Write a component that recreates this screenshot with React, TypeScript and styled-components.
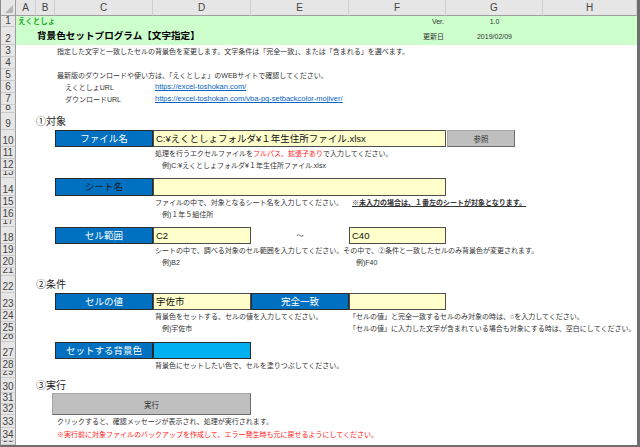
import React from 'react';
import styled, { createGlobalStyle } from 'styled-components';

const GlobalStyle = createGlobalStyle`
  html, body {
    margin: 0;
    padding: 0;
    background: #ffffff;
  }
  body {
    font-family: 'Liberation Sans', 'Noto Sans CJK JP', sans-serif;
  }
`;

const COLS = ['A', 'B', 'C', 'D', 'E', 'F', 'G', 'H'];
const ROW_HEIGHTS = [
  11, 18, 12, 12, 12, 12, 12, 8, 17, 17, 12, 12, 7, 18, 12, 12, 7, 17, 12, 12, 8,
  17, 17, 12, 12, 8, 17, 12, 7, 15, 11, 11, 13, 13, 4,
];

// "D10:F10" -> grid placement (column A is grid line 2, row 1 is grid line 2)
const colLine = (c: string) => c.charCodeAt(0) - 63;
const area = (ref: string) => {
  const [a, b = a] = ref.split(':');
  const [, c1, r1] = a.match(/([A-H])(\d+)/)!;
  const [, c2, r2] = b.match(/([A-H])(\d+)/)!;
  return `
    grid-column: ${colLine(c1)} / ${colLine(c2) + 1};
    grid-row: ${Number(r1) + 1} / ${Number(r2) + 2};
  `;
};

const Sheet = styled.div`
  display: grid;
  width: 640px;
  height: 447px;
  box-sizing: border-box;
  border-left: 1px solid #8c8c8c;
  border-right: 3px solid #6e6e6e;
  border-bottom: 2px solid #6e6e6e;
  grid-template-columns: 15px 20px 19px 98px 98px 98px 97px 97px 94px;
  grid-template-rows: 16px ${ROW_HEIGHTS.map((h) => `${h}px`).join(' ')};
  overflow: hidden;
  color: #333333;
`;

const Corner = styled.div`
  grid-column: 1;
  grid-row: 1;
  position: relative;
  background: #e6e6e6;
  border-right: 1px solid #9e9e9e;
  border-bottom: 1px solid #9e9e9e;
  box-sizing: border-box;

  &::after {
    content: '';
    position: absolute;
    right: 2px;
    bottom: 2px;
    border-left: 8px solid transparent;
    border-bottom: 8px solid #b5b5b5;
  }
`;

const ColHead = styled.div<{ $col: number }>`
  grid-column: ${(p) => p.$col};
  grid-row: 1;
  display: flex;
  align-items: center;
  justify-content: center;
  background: #e6e6e6;
  border-right: 1px solid #cfcfcf;
  border-bottom: 1px solid #9e9e9e;
  box-sizing: border-box;
  font-size: 10px;
  color: #444444;
`;

const RowHead = styled.div<{ $row: number }>`
  grid-column: 1;
  grid-row: ${(p) => p.$row + 1};
  display: flex;
  align-items: flex-end;
  justify-content: center;
  overflow: hidden;
  background: #e6e6e6;
  border-right: 1px solid #9e9e9e;
  border-bottom: 1px solid #c9c9c9;
  box-sizing: border-box;
  font-size: 10px;
  line-height: 11px;
  color: #444444;
`;

const Band = styled.div<{ $at: string }>`
  ${(p) => area(p.$at)}
  background: #ccffcc;
`;

const Text = styled.div<{
  $at: string;
  $size?: number;
  $indent?: number;
  $align?: 'flex-start' | 'center' | 'flex-end';
  $color?: string;
  $bold?: boolean;
  $underline?: boolean;
}>`
  ${(p) => area(p.$at)}
  z-index: 1;
  display: flex;
  align-items: center;
  justify-content: ${(p) => p.$align ?? 'flex-start'};
  min-width: 0;
  padding: 0 2px 0 ${(p) => p.$indent ?? 2}px;
  font-size: ${(p) => p.$size ?? 7}px;
  line-height: 1;
  white-space: nowrap;
  color: ${(p) => p.$color ?? '#333333'};
  font-weight: ${(p) => (p.$bold ? 700 : 400)};
  text-decoration: ${(p) => (p.$underline ? 'underline' : 'none')};
`;

const Red = styled.span`
  color: #ff2020;
`;

const Link = styled.span`
  font-size: 7.5px;
  color: #0563c1;
  text-decoration: underline;
`;

const Label = styled.div<{ $at: string; $dark?: boolean }>`
  ${(p) => area(p.$at)}
  display: flex;
  align-items: center;
  justify-content: center;
  background: #0070c0;
  border: 1px solid #2a2a2a;
  font-size: 9.5px;
  line-height: 1;
  white-space: nowrap;
  color: ${(p) => (p.$dark ? '#1b1b1b' : '#ffffff')};
`;

const Entry = styled.div<{ $at: string }>`
  ${(p) => area(p.$at)}
  display: flex;
  align-items: center;
  padding-left: 2px;
  background: #ffffcc;
  border: 1px solid #4d4d4d;
  font-size: 9.5px;
  line-height: 1;
  white-space: nowrap;
  color: #111111;
`;

const Swatch = styled.div<{ $at: string }>`
  ${(p) => area(p.$at)}
  background: #00b0f0;
  border: 1px solid #2a2a2a;
`;

const Button = styled.div<{ $at: string; $inset?: number; $width?: number }>`
  ${(p) => area(p.$at)}
  display: flex;
  align-items: center;
  justify-content: center;
  ${(p) => (p.$width ? `width: ${p.$width}px;` : '')}
  margin-left: ${(p) => p.$inset ?? 0}px;
  background: #bfbfbf;
  border: 1px solid #a6a6a6;
  border-right-color: #6b6b6b;
  border-bottom-color: #6b6b6b;
  font-size: 7.5px;
  color: #333333;
`;

export default function App() {
  return (
    <>
      <GlobalStyle />
      <Sheet>
        <Corner />
        {COLS.map((c, i) => (
          <ColHead key={c} $col={i + 2}>
            {c}
          </ColHead>
        ))}
        {ROW_HEIGHTS.map((_, i) => (
          <RowHead key={i} $row={i + 1}>
            {i + 1}
          </RowHead>
        ))}

        <Band $at="A1:H2" />
        <Text $at="A1" $size={7.5} $color="#2da82d" $bold>
          えくとしょ
        </Text>
        <Text $at="B2" $size={9.6} $color="#000000" $bold $indent={1}>
          背景色セットプログラム【文字指定】
        </Text>
        <Text $at="F1" $size={7} $align="flex-end">
          Ver.
        </Text>
        <Text $at="G1" $size={7} $align="center">
          1.0
        </Text>
        <Text $at="F2" $size={7} $align="flex-end">
          更新日
        </Text>
        <Text $at="G2" $size={7} $align="center">
          2019/02/09
        </Text>

        <Text $at="C3">
          指定した文字と一致したセルの背景色を変更します。文字条件は「完全一致」、または「含まれる」を選べます。
        </Text>
        <Text $at="C5">
          最新版のダウンロードや使い方は、「えくとしょ」のWEBサイトで確認してください。
        </Text>
        <Text $at="C6" $indent={10}>
          えくとしょURL
        </Text>
        <Text $at="D6">
          <Link>https://excel-toshokan.com/</Link>
        </Text>
        <Text $at="C7" $indent={10}>
          ダウンロードURL
        </Text>
        <Text $at="D7">
          <Link>https://excel-toshokan.com/vba-pg-setbackcolor-mojiver/</Link>
        </Text>

        <Text $at="B9" $size={10} $indent={0} $color="#222222">
          ①対象
        </Text>
        <Label $at="C10">ファイル名</Label>
        <Entry $at="D10:F10">C:¥えくとしょフォルダ¥１年生住所ファイル.xlsx</Entry>
        <Button $at="G10" $inset={1} $width={66}>
          参照
        </Button>
        <Text $at="D11">
          処理を行うエクセルファイルを<Red>フルパス、拡張子あり</Red>で入力してください。
        </Text>
        <Text $at="D12" $indent={9}>
          例)C:¥えくとしょフォルダ¥１年生住所ファイル.xlsx
        </Text>

        <Label $at="C14" $dark>
          シート名
        </Label>
        <Entry $at="D14:F14" />
        <Text $at="D15">ファイルの中で、対象となるシート名を入力してください。</Text>
        <Text $at="F15" $indent={3} $bold $underline>
          ※未入力の場合は、１番左のシートが対象となります。
        </Text>
        <Text $at="D16" $indent={9}>
          例)１年５組住所
        </Text>

        <Label $at="C18">セル範囲</Label>
        <Entry $at="D18">C2</Entry>
        <Text $at="E18" $size={7} $align="center">
          ～
        </Text>
        <Entry $at="F18">C40</Entry>
        <Text $at="D19">
          シートの中で、調べる対象のセル範囲を入力してください。その中で、②条件と一致したセルのみ背景色が変更されます。
        </Text>
        <Text $at="D20" $indent={9}>
          例)B2
        </Text>
        <Text $at="F20" $indent={7}>
          例)F40
        </Text>

        <Text $at="B22" $size={10} $indent={0} $color="#222222">
          ②条件
        </Text>
        <Label $at="C23">セルの値</Label>
        <Entry $at="D23">宇佐市</Entry>
        <Label $at="E23">完全一致</Label>
        <Entry $at="F23" />
        <Text $at="D24">背景色をセットする、セルの値を入力してください。</Text>
        <Text $at="F24" $indent={0}>
          「セルの値」と完全一致するセルのみ対象の時は、○を入力してください。
        </Text>
        <Text $at="D25" $indent={9}>
          例)宇佐市
        </Text>
        <Text $at="F25" $indent={0}>
          「セルの値」に入力した文字が含まれている場合も対象にする時は、空白にしてください。
        </Text>

        <Label $at="C27">セットする背景色</Label>
        <Swatch $at="D27" />
        <Text $at="D28">背景色にセットしたい色で、セルを塗りつぶしてください。</Text>

        <Text $at="B30" $size={10} $indent={0} $color="#222222">
          ③実行
        </Text>
        <Button $at="B31:D32" $inset={16}>
          実行
        </Button>
        <Text $at="C33">クリックすると、確認メッセージが表示され、処理が実行されます。</Text>
        <Text $at="C34" $color="#ff2020">
          ※実行前に対象ファイルのバックアップを作成して、エラー発生時も元に戻せるようにしてください。
        </Text>
      </Sheet>
    </>
  );
}
